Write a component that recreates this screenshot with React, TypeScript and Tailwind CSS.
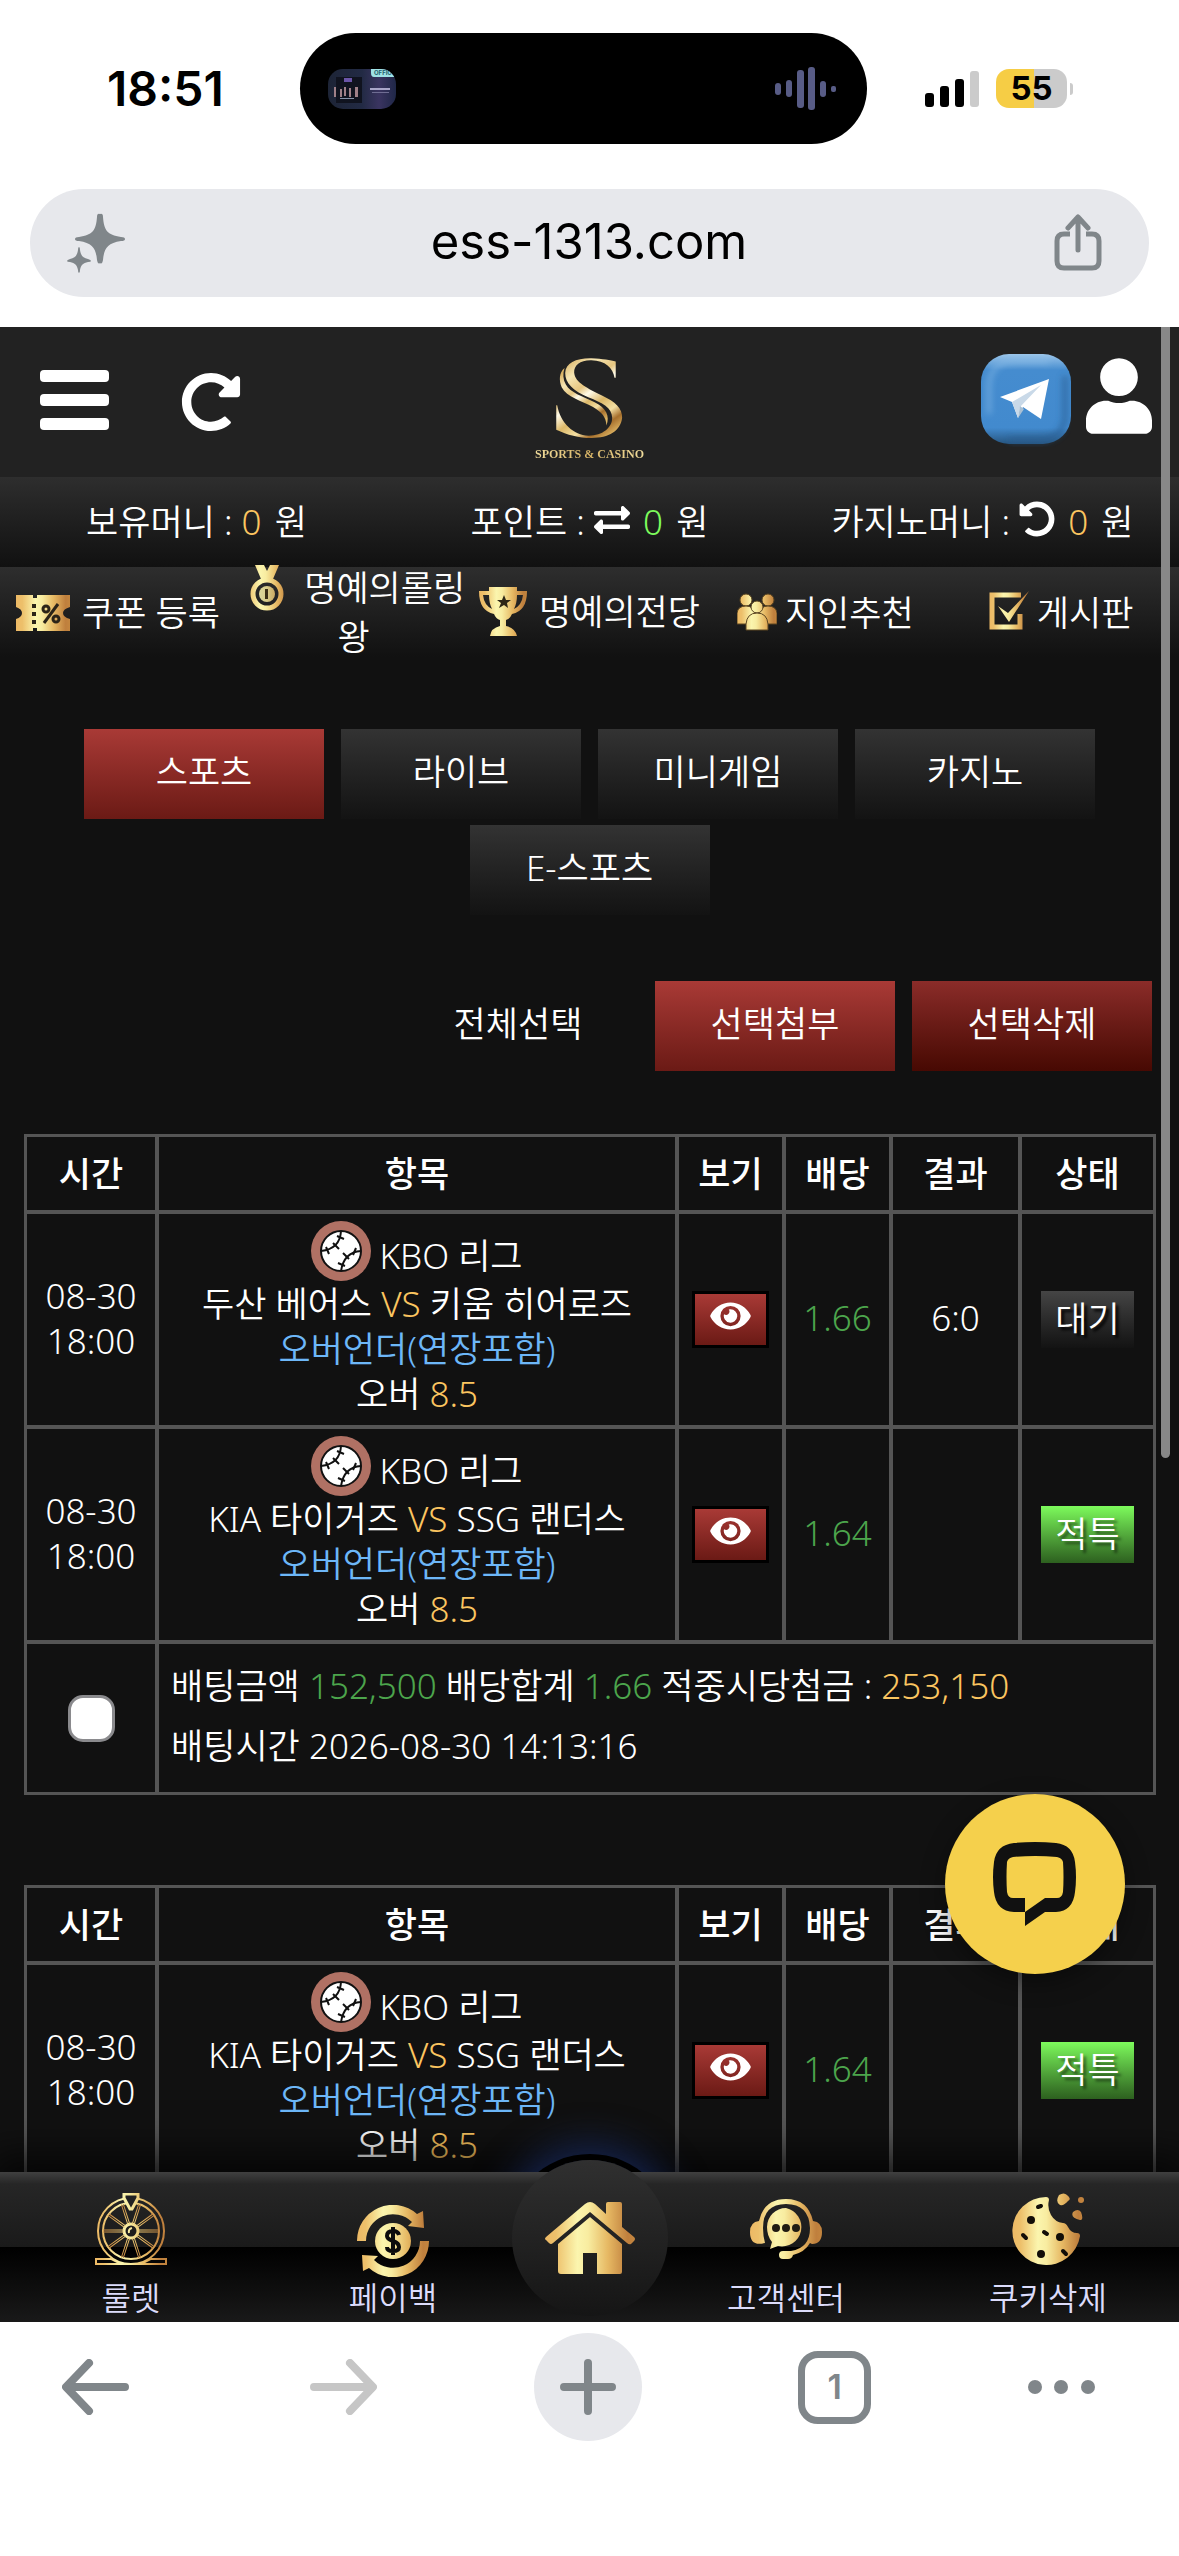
import { useId, type ReactNode } from "react";
import { FaExchangeAlt, FaEye, FaRedoAlt, FaUndoAlt, FaUser } from "react-icons/fa";

const KR = "font-['Noto_Sans','Noto_Sans_CJK_KR',sans-serif]";

function Gold({ w, h, className, children }: { w: number; h: number; className?: string; children: (fill: string) => ReactNode }) {
  const id = useId().replace(/[^a-zA-Z0-9]/g, "g");
  return (
    <svg width={w} height={h} viewBox={`0 0 ${w} ${h}`} className={className} aria-hidden="true">
      <defs>
        <linearGradient id={id} gradientUnits="userSpaceOnUse" x1="0" y1="0" x2={w} y2="0">
          <stop offset="0" stopColor="#edb965" />
          <stop offset="0.12" stopColor="#edc06b" />
          <stop offset="0.36" stopColor="#fbf5ae" />
          <stop offset="0.48" stopColor="#f8eca0" />
          <stop offset="0.7" stopColor="#e6b863" />
          <stop offset="0.92" stopColor="#bf7f3d" />
          <stop offset="1" stopColor="#c4863f" />
        </linearGradient>
      </defs>
      {children(`url(#${id})`)}
    </svg>
  );
}

/* ---------- browser chrome ---------- */

function StatusBar() {
  return (
    <div className="grid grid-cols-[300px_1fr_312px] items-center pt-[33px] font-['Inter',sans-serif] text-black">
      <time className="pl-[107px] text-[48px] leading-none font-semibold">18:51</time>
      <div className="flex h-[111px] items-center justify-between rounded-full bg-black pr-[30px] pl-7">
        <svg width="68" height="40" viewBox="0 0 68 40" aria-hidden="true">
          <defs>
            <clipPath id="art"><rect width="68" height="40" rx="15" /></clipPath>
            <linearGradient id="artbg" x1="0" y1="0" x2="1" y2="0">
              <stop offset="0" stopColor="#1d2436" />
              <stop offset="0.5" stopColor="#222a44" />
              <stop offset="0.75" stopColor="#3a3460" />
              <stop offset="1" stopColor="#1f2747" />
            </linearGradient>
          </defs>
          <g clipPath="url(#art)">
            <rect width="68" height="40" fill="url(#artbg)" />
            <rect x="8" y="8" width="26" height="26" fill="#10131f" />
            <rect x="16" y="9" width="8" height="4" fill="#6b55a8" />
            <g fill="#a08088">
              <rect x="6" y="18" width="2" height="10" /><rect x="12" y="20" width="2" height="8" />
              <rect x="16" y="18" width="2" height="9" /><rect x="21" y="19" width="2" height="9" />
              <rect x="27" y="18" width="3" height="10" />
            </g>
            <rect x="12" y="29" width="14" height="1" fill="#8791a8" />
            <path d="M43 0H68V8H46Q43 8 43 4Z" fill="#9fe3e6" />
            <text x="46" y="6" fontSize="6" fontWeight="700" fill="#23606c">OFFIC</text>
            <rect x="42" y="19" width="20" height="2" fill="#a9a5c9" />
            <rect x="44" y="23" width="17" height="1" fill="#6f6d93" />
          </g>
        </svg>
        <svg width="62" height="44" viewBox="0 0 62 44" fill="#585c86" aria-hidden="true">
          <rect x="0" y="16" width="6" height="12" rx="3" />
          <rect x="11" y="13" width="6" height="17" rx="3" />
          <rect x="22" y="3" width="7" height="38" rx="3" />
          <rect x="33" y="0" width="7" height="43" rx="3" />
          <rect x="45" y="14" width="6" height="16" rx="3" />
          <rect x="56" y="19" width="5" height="6" rx="2" />
        </svg>
      </div>
      <div className="flex items-center gap-[17px] pl-[57px]">
        <svg width="55" height="36" viewBox="0 0 55 36" aria-hidden="true">
          <rect x="1" y="22" width="9" height="14" rx="3" />
          <rect x="16" y="15" width="9" height="21" rx="3" />
          <rect x="31" y="8" width="9" height="28" rx="3" />
          <rect x="46" y="0" width="9" height="36" rx="3" fill="#cbcbcb" />
        </svg>
        <div className="flex items-center gap-[3px]">
          <div className="flex h-[39px] w-[71px] items-center justify-center rounded-[13px] bg-linear-to-r from-[#f6cd45] from-54% to-[#cbcbcb] to-54% text-[33px] leading-none font-bold">55</div>
          <div className="h-3 w-[3px] rounded-r-full bg-[#cbcbcb]" />
        </div>
      </div>
    </div>
  );
}

function AddressBar() {
  return (
    <div className="mx-[30px] mt-[45px] flex h-[108px] items-center justify-between rounded-full bg-[#e7e8ec] pr-[46px] pl-[37px] text-[#80868a]">
      <button type="button" aria-label="AI">
        <svg width="58" height="60" viewBox="0 0 58 60" fill="currentColor" className="block">
          <path d="M33 1Q36 0 36 4C37 17 40 22 54 24Q58 24 58 26Q58 28 54 28C40 30 37 36 36 47Q35 52 33 50Q31 52 30 47C29 36 26 30 12 28Q8 28 8 26Q8 24 12 24C26 22 29 17 30 4Q30 0 33 1Z" />
          <path d="M12 34Q13 34 13 37C14 43 16 45 21 46Q24 47 24 48Q24 49 21 49C16 50 14 52 13 57Q13 60 12 60Q11 60 11 57C10 52 8 50 3 49Q0 49 0 48Q0 47 3 46C8 45 10 43 11 37Q11 34 12 34Z" />
        </svg>
      </button>
      <input aria-label="URL" readOnly value="ess-1313.com" className="w-0 flex-1 bg-transparent pb-1 text-center font-['Inter',sans-serif] text-[49px] leading-none text-black outline-none" />
      <button type="button" aria-label="Share">
        <svg width="50" height="58" viewBox="0 0 50 58" fill="none" stroke="currentColor" strokeWidth="5" strokeLinecap="round" strokeLinejoin="round" className="block">
          <path d="M17 20H11Q4 20 4 27V47Q4 54 11 54H39Q46 54 46 47V27Q46 20 39 20H33" strokeLinecap="butt" />
          <path d="M25 36V4M15 14L25 3L35 14" />
        </svg>
      </button>
    </div>
  );
}

function Toolbar() {
  return (
    <nav className="flex items-center justify-between pt-[11px] pr-[84px] pb-[115px] pl-[62px] text-[#80868a]">
      <button type="button" aria-label="Back" className="w-[91px]">
        <svg width="67" height="56" viewBox="0 0 67 56" fill="none" stroke="currentColor" strokeWidth="8" strokeLinecap="round" strokeLinejoin="round">
          <path d="M63 28H5M27 4L4 28L27 52" />
        </svg>
      </button>
      <button type="button" aria-label="Forward" className="text-[#c6c6c6]">
        <svg width="67" height="56" viewBox="0 0 67 56" fill="none" stroke="currentColor" strokeWidth="8" strokeLinecap="round" strokeLinejoin="round">
          <path d="M4 28H62M40 4L63 28L40 52" />
        </svg>
      </button>
      <button type="button" aria-label="New tab" className="flex size-[108px] items-center justify-center rounded-full bg-[#e7e8ec]">
        <svg width="56" height="56" viewBox="0 0 56 56" stroke="currentColor" strokeWidth="8" strokeLinecap="round">
          <path d="M28 4V52M4 28H52" />
        </svg>
      </button>
      <button type="button" aria-label="Tabs" className="flex size-[73px] items-center justify-center rounded-[20px] border-[7px] border-current font-['Inter',sans-serif] text-[34px] leading-none font-semibold">1</button>
      <button type="button" aria-label="Menu">
        <svg width="67" height="14" viewBox="0 0 67 14" fill="currentColor">
          <circle cx="7" cy="7" r="7" /><circle cx="33" cy="7" r="7" /><circle cx="60" cy="7" r="7" />
        </svg>
      </button>
    </nav>
  );
}

/* ---------- site header ---------- */

function Logo() {
  return (
    <a href="#" className="flex flex-col items-center pt-4" aria-label="Sports & Casino">
      <svg width="71" height="82" viewBox="98 34 222 252" aria-hidden="true">
        <defs>
          <linearGradient id="ribbon" x1="0.2" y1="0" x2="0.8" y2="1">
            <stop offset="0" stopColor="#d9b264" />
            <stop offset="0.18" stopColor="#f6e6b4" />
            <stop offset="0.35" stopColor="#e6c680" />
            <stop offset="0.45" stopColor="#fffbe9" />
            <stop offset="0.6" stopColor="#dcb868" />
            <stop offset="0.75" stopColor="#f4e0a4" />
            <stop offset="0.86" stopColor="#a66f2c" />
            <stop offset="1" stopColor="#e0b765" />
          </linearGradient>
        </defs>
        <g fill="url(#ribbon)">
          <path d="M291 97L287 97C283 66 258 43 215 42C180 41 160 58 161 80C163 112 205 130 248 152C290 172 312 192 311 222C306 264 270 285 215 285C175 285 140 275 105 259V183H108C118 240 160 276 205 278C248 279 280 254 280 222C279 190 250 176 205 158C158 138 133 114 133 82C134 50 168 35 215 36C250 37 275 43 291 46Z" />
          <path d="M131 66C114 80 113 105 122 126C138 158 185 168 220 188C248 204 261 220 262 246C273 216 262 192 225 173C185 154 150 144 135 118C126 102 125 84 131 66Z" />
        </g>
      </svg>
      <span className="mt-1.5 bg-linear-to-r from-[#f0dc9c] via-[#d9b566] to-[#f0dc9c] bg-clip-text font-['Liberation_Serif',serif] text-[12px] leading-[18px] font-bold text-transparent">SPORTS &amp; CASINO</span>
    </a>
  );
}

function SiteHeader() {
  return (
    <header className="grid h-[150px] grid-cols-3 items-center bg-[#222] text-white">
      <div className="flex items-center gap-[72px] pl-[40px]">
        <button type="button" aria-label="메뉴" className="pb-1">
          <svg width="69" height="60" viewBox="0 0 69 60" fill="currentColor" className="block">
            <rect width="69" height="12" rx="4" /><rect y="24" width="69" height="12" rx="4" /><rect y="48" width="69" height="12" rx="4" />
          </svg>
        </button>
        <button type="button" aria-label="새로고침"><FaRedoAlt size={60} /></button>
      </div>
      <div className="flex justify-center"><Logo /></div>
      <div className="flex items-center justify-end gap-[15px] pr-[27px]">
        <a href="#" aria-label="텔레그램">
          <svg width="90" height="104" viewBox="0 0 90 104" className="-mt-2">
            <defs>
              <linearGradient id="tg" x1="0" y1="0" x2="0" y2="1">
                <stop offset="0" stopColor="#9cc6ea" /><stop offset="0.18" stopColor="#458ccf" />
                <stop offset="0.82" stopColor="#428ace" /><stop offset="1" stopColor="#27557f" />
              </linearGradient>
              <filter id="soft"><feGaussianBlur stdDeviation="3" /></filter>
            </defs>
            <rect x="0" y="8" width="90" height="90" rx="28" fill="url(#tg)" />
            <path d="M84 30V72Q82 92 60 94H28" fill="none" stroke="#285c90" strokeWidth="5" opacity=".7" filter="url(#soft)" />
            <path d="M8 68V38Q10 16 32 15H68" fill="none" stroke="#8ec0ea" strokeWidth="4" opacity=".6" filter="url(#soft)" />
            <path d="M19 51L68 33L60 73L42 61L37 72L31 56Z" fill="#fff" />
            <path d="M31 56L60 39L39 61L37 72Z" fill="#c9d9e8" />
            <path d="M39 60L37 72L43 63Z" fill="#a9c0d4" />
          </svg>
        </a>
        <a href="#" aria-label="내 정보"><FaUser className="mb-3 h-[76px] w-[66px]" /></a>
      </div>
    </header>
  );
}

function MoneyBar() {
  return (
    <div className="grid h-[90px] grid-cols-3 items-center bg-linear-to-b from-[#2e2e2e] to-[#111] text-center">
      <p>보유머니 : <b className="mr-1 font-[350] text-[#fbc560]">0</b> 원</p>
      <p>
        포인트 :{" "}
        <button type="button" aria-label="전환" className="mr-1 align-[-3px]"><FaExchangeAlt size={36} /></button>{" "}
        <b className="mr-1 font-[350] text-[#7dfb5c]">0</b> 원
      </p>
      <p>
        카지노머니 :{" "}
        <button type="button" aria-label="회수" className="mr-1 align-[-2px]"><FaUndoAlt size={36} /></button>{" "}
        <b className="mr-1 font-[350] text-[#fbc560]">0</b> 원
      </p>
    </div>
  );
}

function Coupon() {
  return (
    <Gold w={54} h={36} className="mr-3 inline-block align-[-5px]">
      {(f) => (
        <>
          <path d="M0 0H17V3H21V0H54V12Q47 14 47 18Q47 22 54 24V36H21V33H17V36H0V24Q6 22 6 18Q6 14 0 12Z" fill={f} />
          <g fill="#2b2418"><rect x="16" y="9" width="4" height="4" /><rect x="16" y="17" width="4" height="4" /><rect x="16" y="25" width="4" height="4" /></g>
          <g fill="none" stroke="#2b2418" strokeWidth="3"><path d="M28 28L42 9" /><circle cx="30" cy="14" r="3" /><circle cx="40" cy="24" r="3" /></g>
        </>
      )}
    </Gold>
  );
}
function Medal() {
  return (
    <Gold w={50} h={46} className="mr-3 inline-block align-[-10px]">
      {(f) => (
        <>
          <path d="M13 0H22L25 6L28 0H37L31 14H19Z" fill={f} />
          <circle cx="25" cy="29" r="14" fill="none" stroke={f} strokeWidth="5" />
          <circle cx="25" cy="29" r="8" fill={f} opacity=".85" />
          <rect x="23" y="24" width="3" height="10" fill="#3b2f16" />
        </>
      )}
    </Gold>
  );
}
function Trophy() {
  return (
    <Gold w={48} h={50} className="mr-3 inline-block align-[-12px]">
      {(f) => (
        <>
          <path d="M10 0H38V4H48Q48 24 33 27Q31 32 27 33V39Q36 41 38 49H11Q12 41 21 39V33Q17 32 15 27Q0 24 0 4H10ZM10 8H4Q5 18 13 22Q10 16 10 8ZM38 8Q38 16 35 22Q43 18 44 8Z" fill={f} fillRule="evenodd" />
          <path d="M25 8L27 13H32L28 16L29 21L25 18L20 21L22 16L18 13H23Z" fill="#2e2716" />
        </>
      )}
    </Gold>
  );
}
function People() {
  return (
    <Gold w={40} h={38} className="mr-2 inline-block align-[-5px]">
      {(f) => (
        <g fill={f} stroke="#5a4420" strokeWidth="1">
          <circle cx="9" cy="7" r="6" /><circle cx="31" cy="7" r="6" />
          <path d="M0 31V20Q1 13 9 13Q16 13 18 20V31Z" /><path d="M22 31V20Q24 13 31 13Q39 13 40 20V31Z" />
          <circle cx="20" cy="14" r="6" /><path d="M9 37V31Q10 20 20 20Q30 20 31 31V37Z" />
        </g>
      )}
    </Gold>
  );
}
function CheckBoard() {
  return (
    <Gold w={40} h={42} className="mr-2 inline-block align-[-5px]">
      {(f) => (
        <>
          <path d="M32 6H3V38H31V25" fill="none" stroke={f} strokeWidth="5" />
          <path d="M9 17L19 24L40 2L20 33Z" fill={f} />
        </>
      )}
    </Gold>
  );
}

const shortcuts = [
  { icon: <Coupon />, label: "쿠폰 등록" },
  { icon: <Medal />, label: "명예의롤링왕" },
  { icon: <Trophy />, label: "명예의전당" },
  { icon: <People />, label: "지인추천" },
  { icon: <CheckBoard />, label: "게시판" },
];

function Shortcuts() {
  return (
    <nav className="grid auto-rows-[90px] grid-cols-5 items-center bg-linear-to-b from-[#2e2e2e] to-[#111] text-center leading-[49px]">
      {shortcuts.map((s) => (
        <a key={s.label} href="#" className="block">{s.icon}{s.label}</a>
      ))}
    </nav>
  );
}

/* ---------- filters ---------- */

const base = "h-[90px] w-[240px] pb-1 text-center";
const red = `${base} bg-linear-to-b from-[#a93a36] to-[#6b1a15]`;
const dark = `${base} bg-linear-to-b from-[#333] to-[#131313]`;

function Filters() {
  return (
    <>
      <div className="mt-[72px] flex flex-wrap justify-center gap-x-[17px] gap-y-1.5 px-[60px]">
        {["스포츠", "라이브", "미니게임", "카지노", "E-스포츠"].map((t, i) => (
          <button type="button" key={t} className={i === 0 ? red : dark}>{t}</button>
        ))}
      </div>
      <div className="mt-[66px] flex flex-wrap justify-end gap-[17px] pr-[27px]">
        <button type="button" className={base}>전체선택</button>
        <button type="button" className={red}>선택첨부</button>
        <button type="button" className={`${base} bg-linear-to-b from-[#8b2c29] to-[#470903]`}>선택삭제</button>
      </div>
    </>
  );
}

/* ---------- bet tables ---------- */

type Bet = { home: string; away: string; odds: string; score: string; status: string };
const doosan: Bet = { home: "두산 베어스", away: "키움 히어로즈", odds: "1.66", score: "6:0", status: "대기" };
const kia: Bet = { home: "KIA 타이거즈", away: "SSG 랜더스", odds: "1.64", score: "", status: "적특" };

function Baseball() {
  return (
    <svg width="60" height="60" viewBox="0 0 60 60" className="mr-2 inline-block align-[-12px]" aria-hidden="true">
      <circle cx="30" cy="30" r="30" fill="#b07164" />
      <circle cx="30" cy="30" r="20" fill="#fff" stroke="#111" strokeWidth="2" />
      <g fill="none" stroke="#111" strokeWidth="2">
        <path d="M30 10Q29 28 10 30M50 30Q33 31 30 50" />
        <path d="M26 15L33 18M22 22L28 28M15 26L18 33M45 27L42 34M32 32L38 38M27 42L34 45" />
      </g>
    </svg>
  );
}

const cell = "border-r-4 border-b-4 border-[#555] px-0 pt-0 pb-1 text-center last:border-r-0";

function BetRow({ bet }: { bet: Bet }) {
  return (
    <tr>
      <td className={cell}>08-30<br />18:00</td>
      <td className="h-[215px] border-r-4 border-b-4 border-[#555] p-0 text-center">
        <div className="-mt-[3px]"><Baseball />KBO 리그</div>
        <div>{bet.home} <span className="text-[#fbc560]">VS</span> {bet.away}</div>
        <div className="text-[#6db7f8]">오버언더(연장포함)</div>
        <div>오버 <span className="text-[#fbc560]">8.5</span></div>
      </td>
      <td className="border-r-4 border-b-4 border-[#555] p-0">
        <button type="button" aria-label="보기" className="mx-auto flex h-[57px] w-[77px] justify-center border-[3px] border-black bg-linear-to-b from-[#a93a36] to-[#6b1a15] pt-1">
          <FaEye className="h-9 w-[41px]" />
        </button>
      </td>
      <td className={`${cell} text-[#4ca54c]`}>{bet.odds}</td>
      <td className={cell}>{bet.score}</td>
      <td className="border-b-4 border-[#555] p-0 text-center">
        <span className={bet.status === "대기"
          ? "mx-auto block h-[57px] w-[93px] bg-linear-to-b from-[#454545] to-[#131313] leading-[55px] text-shadow-[3px_3px_3px_#000]"
          : "mx-auto block h-[57px] w-[93px] bg-linear-to-b from-[#7dfb5c] to-[#2d601f] leading-[55px] text-shadow-[3px_3px_3px_#0008]"}>{bet.status}</span>
      </td>
    </tr>
  );
}

function BetTable({ id, bets }: { id: string; bets: Bet[] }) {
  return (
    <table className="w-full table-fixed border-separate border-spacing-0 border-[3px] border-[#555] leading-[45px]">
      <colgroup>
        <col className="w-[132px]" /><col /><col className="w-[107px]" /><col className="w-[107px]" /><col className="w-[129px]" /><col className="w-[131px]" />
      </colgroup>
      <thead>
        <tr>
          {["시간", "항목", "보기", "배당", "결과", "상태"].map((h) => (
            <th key={h} scope="col" className="h-[77px] border-r-4 border-b-4 border-[#555] p-0 font-medium last:border-r-0">{h}</th>
          ))}
        </tr>
      </thead>
      <tbody>
        {bets.map((b, i) => <BetRow key={i} bet={b} />)}
        <tr>
          <td className="h-[148px] border-r-4 border-[#555] p-0 text-center">
            <input id={id} type="checkbox" aria-label="선택" className="mx-auto block size-[47px] appearance-none rounded-[15px] border-[3px] border-[#8a8a8d] bg-white" />
          </td>
          <td colSpan={5} className="px-3 pt-0 pb-1 text-left leading-[60px]">
            <p>배팅금액 <span className="text-[#4ca54c]">152,500</span> 배당합계 <span className="text-[#4ca54c]">1.66</span> 적중시당첨금 : <span className="text-[#fbc560]">253,150</span></p>
            <p>배팅시간 2026-08-30 14:13:16</p>
          </td>
        </tr>
      </tbody>
    </table>
  );
}

/* ---------- bottom navigation ---------- */

function Roulette() {
  const spokes = [0, 36, 72, 108, 144, 180, 216, 252, 288, 324];
  return (
    <Gold w={72} h={72}>
      {(f) => (
        <g fill="none" stroke={f} strokeWidth="2">
          <circle cx="36" cy="38" r="33" /><circle cx="36" cy="38" r="28" />
          <circle cx="36" cy="38" r="7" strokeWidth="3" />
          {spokes.map((a) => <path key={a} d="M43 37H64M43 39H64" strokeWidth="1" transform={`rotate(${a} 36 38)`} />)}
          <path d="M1 66H16Q36 78 56 66H71V71H1Z" fill="#050505" />
          <path d="M29 1H43V5L37 16H35L29 5Z" fill="#222" strokeWidth="3" />
          <path d="M34 40Q33 36 37 35" />
        </g>
      )}
    </Gold>
  );
}
function Payback() {
  return (
    <Gold w={72} h={72} className="mt-3">
      {(f) => (
        <>
          <path d="M0 36A36 36 0 0 1 60 9L66 6L67 23L51 21L55 17A27 27 0 0 0 9 36ZM72 36A36 36 0 0 1 12 63L6 66L5 50L21 51L17 55A27 27 0 0 0 63 36Z" fill={f} />
          <circle cx="36" cy="36" r="18" fill={f} />
          <path d="M42 30Q41 26 36 26Q30 26 30 31Q30 34 36 36Q42 38 42 42Q42 46 36 46Q30 46 30 42M36 22V50" fill="none" stroke="#0c0c0c" strokeWidth="4" />
        </>
      )}
    </Gold>
  );
}
function House() {
  return (
    <Gold w={90} h={72}>
      {(f) => (
        <g fill={f}>
          <path d="M1 35L40 2Q45 -2 50 2L61 12V2Q61 0 63 0H75Q77 0 77 2V25L89 35Q91 37 89 39L86 42Q84 43 82 41L45 10L8 41Q6 43 4 41L1 38Q-1 37 1 35Z" />
          <path d="M45 15L77 42V70Q77 72 75 72H52V51H38V72H16Q13 72 13 69V42Z" />
        </g>
      )}
    </Gold>
  );
}
function Headset() {
  return (
    <Gold w={72} h={60} className="mt-[6px]">
      {(f) => (
        <>
          <path d="M9 22Q14 0 36 0Q58 0 63 22Q72 23 72 33Q72 45 62 45L60 44Q55 53 43 56Q42 60 38 60H33Q29 60 29 56Q29 52 33 52H41Q60 49 60 29Q59 5 36 5Q13 5 13 29Q13 37 15 44Q0 48 0 33Q0 23 9 22Z" fill={f} />
          <path d="M36 9A19 19 0 1 1 28 47Q25 48 20 50L22 43Q17 37 17 28A19 19 0 0 1 36 9Z" fill={f} />
          <g fill="#201b12"><circle cx="26" cy="29" r="4" /><circle cx="36" cy="29" r="4" /><circle cx="46" cy="29" r="4" /></g>
        </>
      )}
    </Gold>
  );
}
function Cookie() {
  return (
    <Gold w={72} h={72}>
      {(f) => (
        <>
          <path d="M34 4Q37 4 37 7Q35 15 39 22Q43 29 51 30Q54 30 56 34Q59 40 65 40Q68 40 68 43A34 34 0 1 1 34 4ZM47 2Q52 -1 55 2Q60 6 56 8Q52 13 48 12Q43 9 47 2ZM61 19Q66 15 69 19Q72 27 68 27Q58 25 61 19Z" fill={f} />
          <circle cx="69" cy="7" r="3" fill={f} />
          <g fill="#120e08"><circle cx="19" cy="27" r="4" /><circle cx="48" cy="44" r="4" /><circle cx="29" cy="61" r="4" /></g>
          <path d="M26 14L29 13M11 42L14 45M32 39L35 41M51 58L54 61" stroke="#120e08" strokeWidth="4" strokeLinecap="round" />
        </>
      )}
    </Gold>
  );
}

function BottomNav() {
  const item = "flex h-[150px] flex-col items-center justify-between pt-[21px] pb-[3px]";
  return (
    <nav className="absolute inset-x-0 bottom-0 text-[32px] leading-[42px] text-[#dcdcfb] shadow-[0_-8px_36px_10px_#000a]">
      <div className="absolute -top-3 left-1/2 size-[156px] -translate-x-1/2 rounded-full shadow-[0_0_0_6px_#000,0_-4px_36px_12px_#16244e]" />
      <div className="relative grid h-[150px] grid-cols-[minmax(0,2fr)_minmax(0,2fr)_minmax(0,1fr)_minmax(0,2fr)_minmax(0,2fr)] bg-[linear-gradient(#404040_0,#262626_8%,#1a1a1a_50%,#000_50%,#191919)]">
        <a href="#" className={item}><Roulette />룰렛</a>
        <a href="#" className={item}><Payback />페이백</a>
        <a href="#" aria-label="홈" className="-mt-3 flex size-[156px] items-center justify-center justify-self-center rounded-full bg-linear-to-b from-[#303030] to-[#151515]"><House /></a>
        <a href="#" className={item}><Headset />고객센터</a>
        <a href="#" className={item}><Cookie />쿠키삭제</a>
      </div>
    </nav>
  );
}

export default function App() {
  return (
    <div className={`${KR} flex h-screen flex-col overflow-hidden bg-white`}>
      <StatusBar />
      <AddressBar />
      <main className="relative mt-[30px] min-h-0 flex-1 overflow-hidden bg-[#111] text-[35px] font-[350] text-white">
        <SiteHeader />
        <MoneyBar />
        <Shortcuts />
        <Filters />
        <div className="mt-[63px] flex flex-col gap-[90px] pr-[23px] pl-6">
          <BetTable id="bet-1" bets={[doosan, kia]} />
          <BetTable id="bet-2" bets={[kia]} />
        </div>
        <BottomNav />
        <button type="button" aria-label="채팅 상담" className="absolute right-[54px] bottom-[348px] flex size-[180px] items-center justify-center rounded-full bg-[#f5d04c] shadow-[0_8px_24px_#0006]">
          <svg width="84" height="84" viewBox="0 0 84 84" aria-hidden="true">
            <path d="M21 1Q42 -1 63 1Q80 3 82 20Q84 35 82 50Q80 69 63 70H52L32 84V70H21Q3 69 1 50Q-1 35 1 20Q3 3 21 1Z" fill="#111" />
            <path d="M20 15Q42 13 64 15Q69 16 70 20Q71 35 70 50Q69 56 64 56H52L32 70V56H20Q15 56 14 50Q13 35 14 20Q15 16 20 15Z" fill="#f5d04c" />
          </svg>
        </button>
        <div className="absolute top-0 right-[9px] h-[1131px] w-[9px] rounded-b-full bg-[#888]" />
      </main>
      <Toolbar />
    </div>
  );
}
